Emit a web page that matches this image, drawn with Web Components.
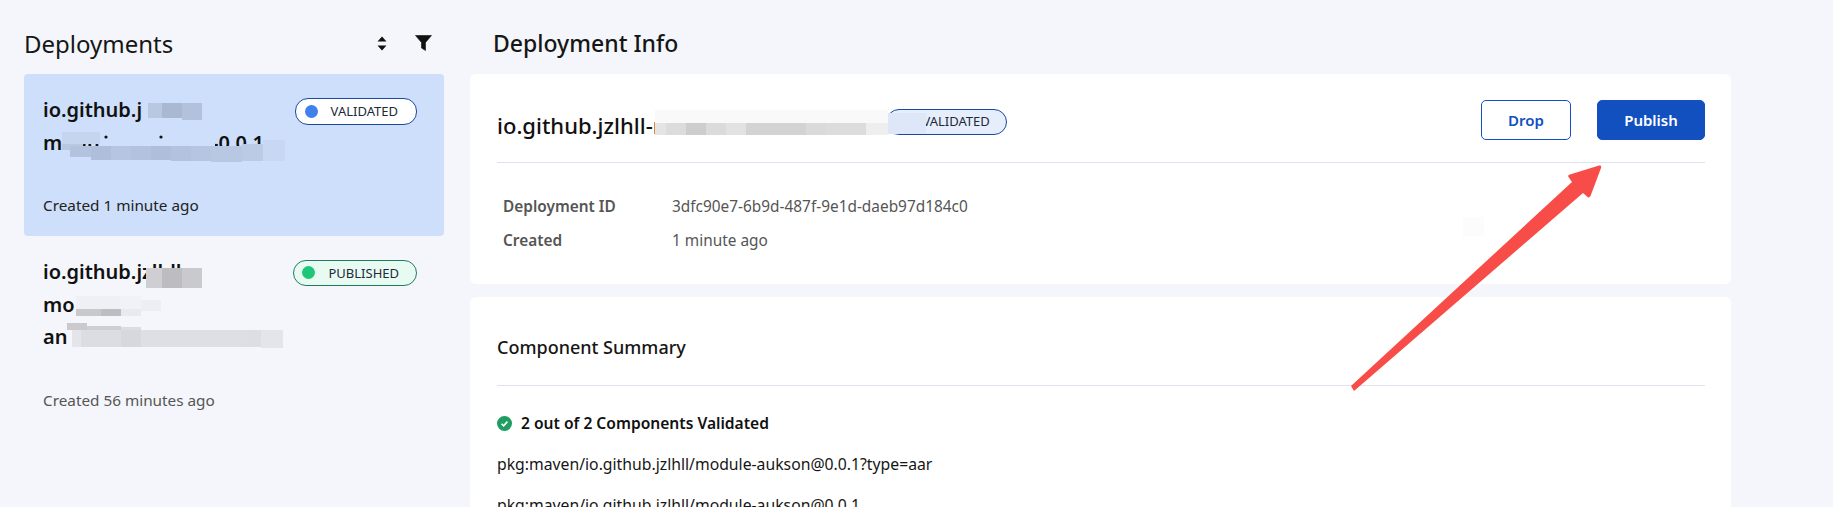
<!DOCTYPE html>
<html>
<head>
<meta charset="utf-8">
<style>
html, body { margin: 0; height: 507px; overflow: hidden; background: #f4f6fb; }
body { font-family: "Noto Sans", "Open Sans", sans-serif; color: #111; position: relative; }
</style>
<script>
class AppShell extends HTMLElement {
  constructor() {
    super();
    this.attachShadow({mode: 'open'}).innerHTML = `
<style>
:host { display: flex; gap: 26px; padding-left: 24px; width: 1733px; height: 507px; overflow: hidden; }
::slotted(deployment-list) { flex: 0 0 420px; }
::slotted(deployment-detail) { flex: 0 0 1261px; }
</style>
<slot></slot>`;
  }
}
customElements.define('app-shell', AppShell);

class DeploymentList extends HTMLElement {
  constructor() {
    super();
    this.attachShadow({mode: 'open'}).innerHTML = `
<style>
:host { display: block; }
header { display: flex; align-items: center; height: 62px; padding-top: 12px; }
h2 { margin: 0; font-size: 24px; font-weight: 400; color: #161616; flex: 1; }
svg { display: block; }
.sort { margin-right: 28px; }
.filter { margin-right: 12px; }
</style>
<header>
  <h2>Deployments</h2>
  <svg class="sort" width="10" height="15" viewBox="0 0 10 15">
    <path d="M5 .5 9.5 5.5H.5Z M5 14.5 9.5 9.5H.5Z" fill="#111"/>
  </svg>
  <svg class="filter" width="17" height="16" viewBox="0 0 17 16">
    <path d="M.5.5h16L10.5 7.5V15.5L6.5 13V7.5Z" fill="#111" stroke="#111" stroke-linejoin="round" stroke-width=".6"/>
  </svg>
</header>
<slot></slot>`;
  }
}
customElements.define('deployment-list', DeploymentList);

class DeploymentCard extends HTMLElement {
  constructor() {
    super();
    this.attachShadow({mode: 'open'}).innerHTML = `
<style>
:host { display: block; padding: 20px 27px 20px 19px; border-radius: 4px; font-size: 15.3px; color: #555; }
:host([selected]) { background: #cddffa; color: #222; }
.top { display: flex; justify-content: space-between; align-items: flex-start; }
.name { font-size: 20px; line-height: 32.5px; font-weight: 600; color: #111; white-space: nowrap; }
.when { margin-top: 35px; line-height: 22px; }
::slotted(status-badge) { margin-top: 4px; }
</style>
<div class="top">
  <div class="name"><slot name="name"></slot></div>
  <slot name="badge"></slot>
</div>
<div class="when"><slot></slot></div>`;
  }
}
customElements.define('deployment-card', DeploymentCard);

class StatusBadge extends HTMLElement {
  constructor() {
    super();
    this.attachShadow({mode: 'open'}).innerHTML = `
<style>
:host { display: inline-flex; align-items: center; box-sizing: border-box; height: 27px; padding: 0 18px 0 9px; gap: 13px;
  border: 1px solid #1a4a9e; border-radius: 13px; background: #fff; font-size: 13px; font-weight: 400; color: #1d2a3a; white-space: nowrap; line-height: 1; }
:host([kind=published]) { height: 26px; padding: 0 17px 0 8px; border-color: #1f7d5c; background: #e8fbf2; }
:host([tint]) { background: #e6eefb; height: 26px; padding-right: 16px; }
i { width: 13px; height: 13px; border-radius: 50%; background: #3f7fee; flex: none; }
:host([kind=published]) i { background: #1fc67a; margin-top: -2px; }
</style>
<i></i><slot></slot>`;
  }
}
customElements.define('status-badge', StatusBadge);

class DeploymentDetail extends HTMLElement {
  constructor() {
    super();
    this.attachShadow({mode: 'open'}).innerHTML = `
<style>
:host { display: block; }
h2 { margin: 0; height: 62px; padding: 12px 0 0 23px; box-sizing: content-box; line-height: 62px; font-size: 23px; font-weight: 500; color: #161616; }
.stack { display: flex; flex-direction: column; gap: 13px; }
</style>
<h2>Deployment Info</h2>
<div class="stack"><slot></slot></div>`;
  }
}
customElements.define('deployment-detail', DeploymentDetail);

class InfoCard extends HTMLElement {
  constructor() {
    super();
    this.attachShadow({mode: 'open'}).innerHTML = `
<style>
:host { display: block; background: #fff; border-radius: 6px; padding: 0 26px 0 27px; }
</style>
<slot></slot>`;
  }
}
customElements.define('info-card', InfoCard);

class ActionButton extends HTMLElement {
  constructor() {
    super();
    this.attachShadow({mode: 'open'}).innerHTML = `
<style>
:host { display: inline-flex; align-items: center; justify-content: center; box-sizing: border-box; height: 40px; border-radius: 5px;
  border: 1px solid #124fbf; background: #fff; color: #124fbf; font-size: 15px; font-weight: 600; }
:host([primary]) { background: #124fbf; color: #fff; }
</style>
<slot></slot>`;
  }
}
customElements.define('action-button', ActionButton);

class DetailHeader extends HTMLElement {
  constructor() {
    super();
    this.attachShadow({mode: 'open'}).innerHTML = `
<style>
:host { display: flex; align-items: center; height: 40px; padding: 26px 0 22px; border-bottom: 1px solid #dde3f1; }
.name { font-size: 22px; line-height: 30px; margin-top: 10px; font-weight: 500; color: #111; white-space: nowrap; }
.gap { flex: 1; }
::slotted(status-badge) { margin-left: 13px; margin-top: 3px; }
::slotted(action-button) { margin-left: 26px; }
</style>
<div class="name"><slot name="name"></slot></div>
<slot name="badge"></slot>
<div class="gap"></div>
<slot></slot>`;
  }
}
customElements.define('detail-header', DetailHeader);

class FactTable extends HTMLElement {
  constructor() {
    super();
    this.attachShadow({mode: 'open'}).innerHTML = `
<style>
:host { display: grid; grid-template-columns: 169px 1fr; grid-auto-rows: 34px; align-items: center; padding: 26px 0 27px 6px; font-size: 15.4px; color: #555; }
::slotted(b) { font-weight: 600; }
</style>
<slot></slot>`;
  }
}
customElements.define('fact-table', FactTable);

class ComponentSummary extends HTMLElement {
  constructor() {
    super();
    this.attachShadow({mode: 'open'}).innerHTML = `
<style>
:host { display: block; }
h3 { margin: 0; padding: 36px 0 24px; line-height: 28px; font-size: 18px; font-weight: 500; color: #161616; border-bottom: 1px solid #e2e2f0; }
.ok { display: flex; align-items: center; gap: 9px; margin-top: 25px; line-height: 24px; font-size: 15.6px; font-weight: 600; color: #111; }
svg { display: block; flex: none; }
.list { display: flex; flex-direction: column; gap: 17px; margin-top: 17px; font-size: 15.75px; line-height: 24px; color: #161616; }
</style>
<h3>Component Summary</h3>
<div class="ok">
  <svg width="15" height="15" viewBox="0 0 15 15">
    <circle cx="7.5" cy="7.5" r="7.5" fill="#1f9d63"/>
    <path d="M4.6 7.8 6.6 9.8 10.4 5.6" fill="none" stroke="#fff" stroke-width="1.6"/>
  </svg>
  <span><slot name="result"></slot></span>
</div>
<div class="list"><slot></slot></div>`;
  }
}
customElements.define('component-summary', ComponentSummary);

// the scribbles and the red arrow someone put over the screenshot
class ScreenshotMarks extends HTMLElement {
  constructor() {
    super();
    const blocks = [
      // first card, name
      [148,103,14,15,'#b9c8e1'],[162,103,20,15,'#a9b9d4'],[182,103,20,17,'#b3c2dc'],
      [62,132,38,12,'#c5d5ee'],[100,132,115,14,'#cddffa'],
      [62,144,20,6,'#b9c8e1'],[70,146,21,11,'#b3c3de'],[91,146,20,14,'#aebedb'],[111,146,20,14,'#b6c6e0'],
      [131,146,20,14,'#b3c3de'],[151,146,20,14,'#aebedb'],[171,146,20,15,'#b3c3de'],[191,146,20,15,'#b6c6e0'],
      [211,146,31,16,'#b8c7e2'],[242,144,21,17,'#bccbe5'],[263,140,22,21,'#c8d8f2'],
      // second card, name
      [146,268,16,20,'#cfcfd3'],[162,268,20,20,'#bdbdc1'],[182,268,20,20,'#cacace'],
      [76,296,44,14,'#eff0f5'],[120,296,21,14,'#f1f2f7'],[141,300,20,11,'#eceef3'],
      [76,309,45,7,'#c9c9cd'],[101,309,20,7,'#bdbdc2'],[121,309,20,7,'#e9eaef'],
      [67,323,20,7,'#c9c9ce'],[87,326,34,5,'#cfcfd3'],[121,327,20,4,'#dcdde2'],
      [72,330,9,17,'#e4e5ea'],[81,330,20,17,'#dcdde2'],[101,330,20,17,'#dcdde2'],[121,330,20,17,'#d7d8dd'],[141,330,60,17,'#dedfe4'],
      [201,330,40,17,'#dedfe4'],[241,330,20,17,'#dddee3'],[261,330,22,18,'#e4e5ea'],
      // main name, top pale band then the darker row
      [655,110,233,13,'#f9f9f9'],[655,123,11,12,'#e4e4e4'],[666,123,20,12,'#dcdcdc'],[686,123,20,12,'#cdcdcd'],
      [706,123,20,12,'#dbdbdb'],[726,123,20,12,'#e2e2e2'],[746,123,60,12,'#d3d3d3'],[806,123,20,12,'#dadada'],
      [826,123,40,12,'#dcdcdc'],[866,123,22,12,'#eeeeee'],[888,113,38,21,'#dde7f8'],
      // the faint patch in the first info card
      [1463,217,21,19,'#fcfcfc'],
    ];
    const rects = blocks.map(([x, y, w, h, c]) =>
      `<rect x="${x}" y="${y}" width="${w}" height="${h}" fill="${c}"/>`).join('');
    this.attachShadow({mode: 'open'}).innerHTML = `
<style>
:host { display: block; position: absolute; left: 0; top: 0; width: 1833px; height: 507px; pointer-events: none; }
svg { display: block; }
</style>
<svg width="1833" height="507" viewBox="0 0 1833 507">
  ${rects}
  <circle cx="106" cy="137" r="1.6" fill="#111"/>
  <circle cx="161" cy="137" r="1.6" fill="#111"/>
  <path d="M1351 386 1572 182 1568.5 177Q1567.5 175 1570 174.5L1599 165.5Q1602 165 1601 168L1590.5 196Q1589 198.5 1587 196.5L1583 193 1354 391Z" fill="#f84c48"/>
</svg>`;
  }
}
customElements.define('screenshot-marks', ScreenshotMarks);
</script>
</head>
<body>
<app-shell>
  <deployment-list>
    <deployment-card selected>
      <span slot="name">io.github.j<br>module-aukson-v-0.0.1</span>
      <status-badge slot="badge">VALIDATED</status-badge>
      Created 1 minute ago
    </deployment-card>
    <deployment-card>
      <span slot="name">io.github.jzlhll<br>mo<br>an</span>
      <status-badge slot="badge" kind="published">PUBLISHED</status-badge>
      Created 56 minutes ago
    </deployment-card>
  </deployment-list>
  <deployment-detail>
    <info-card>
      <detail-header>
        <span slot="name">io.github.jzlhll-module-aukson-0.0.1</span>
        <status-badge slot="badge" tint>VALIDATED</status-badge>
        <action-button style="width:90px">Drop</action-button>
        <action-button primary style="width:108px">Publish</action-button>
      </detail-header>
      <fact-table>
        <b>Deployment ID</b><span>3dfc90e7-6b9d-487f-9e1d-daeb97d184c0</span>
        <b>Created</b><span>1 minute ago</span>
      </fact-table>
    </info-card>
    <info-card>
      <component-summary>
        <span slot="result">2 out of 2 Components Validated</span>
        <span>pkg:maven/io.github.jzlhll/module-aukson@0.0.1?type=aar</span>
        <span>pkg:maven/io.github.jzlhll/module-aukson@0.0.1</span>
      </component-summary>
    </info-card>
  </deployment-detail>
</app-shell>
<screenshot-marks></screenshot-marks>
</body>
</html>
